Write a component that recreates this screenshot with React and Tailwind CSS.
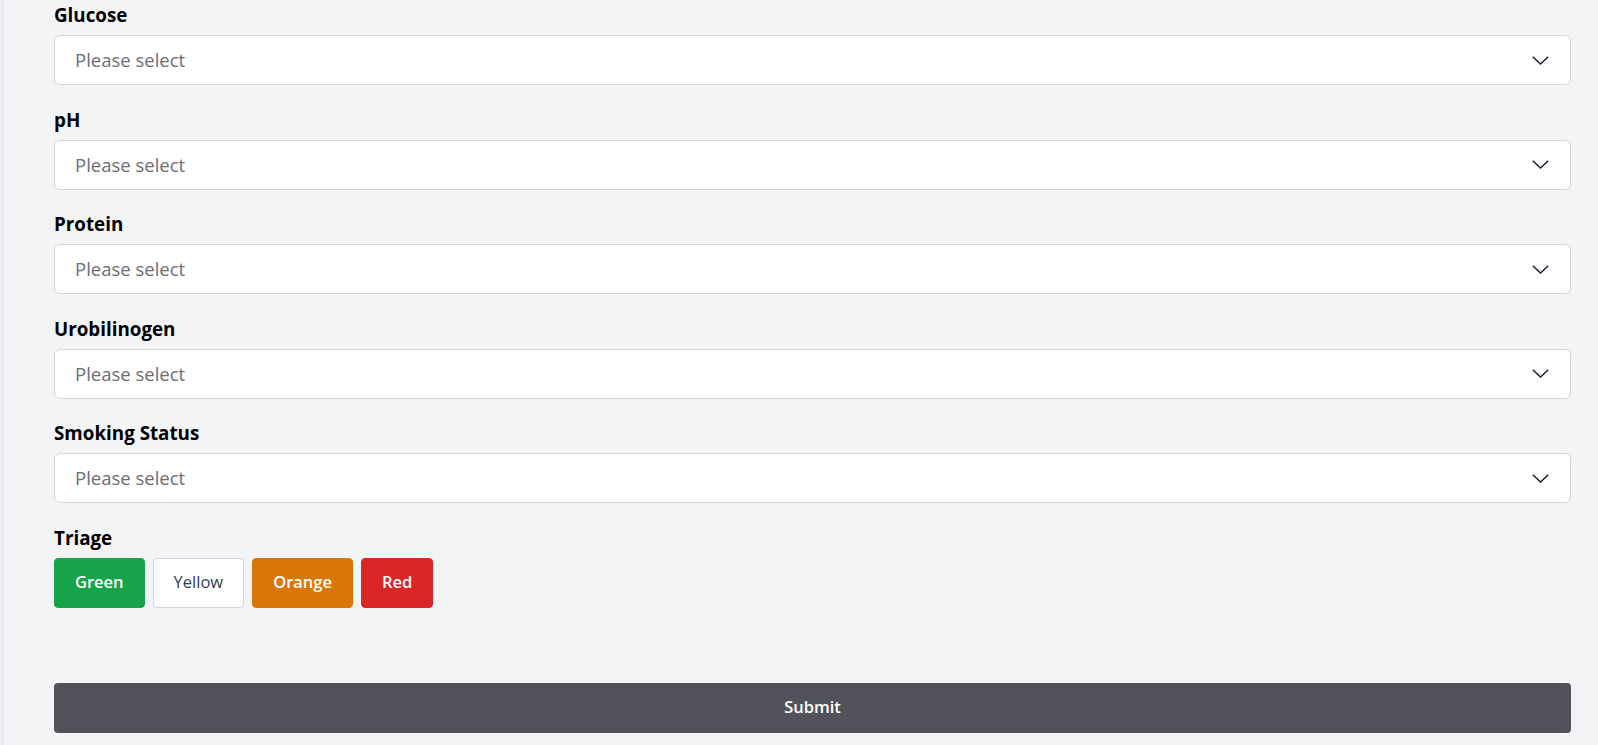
import { useState } from 'react'
import clsx from 'clsx'

const FIELDS = ['Glucose', 'pH', 'Protein', 'Urobilinogen', 'Smoking Status']

const TRIAGE = [
  { label: 'Green', cls: 'bg-[#16a34a] border-[#16a34a] text-white font-semibold' },
  { label: 'Yellow', cls: 'bg-white border-gray-300 text-gray-700' },
  { label: 'Orange', cls: 'bg-[#d97706] border-[#d97706] text-white font-semibold' },
  { label: 'Red', cls: 'bg-[#dc2626] border-[#dc2626] text-white font-semibold' },
]

function Chevron() {
  return (
    <svg width="17" height="9" viewBox="0 0 17 9" fill="none" className="shrink-0">
      <path d="M0.8 0.8 L8.5 8 L16.2 0.8" stroke="#111827" strokeWidth="1.4" />
    </svg>
  )
}

function SelectField({ label }) {
  return (
    <div>
      <label className="block text-[18.8px] leading-6 font-bold text-black mb-2">{label}</label>
      <button
        type="button"
        className="w-full h-[50px] flex items-center justify-between bg-white border border-[#d4d6da] rounded-md pl-5 pr-[21px] text-left"
      >
        <span className="text-[18.5px] text-[#6b6e75]">Please select</span>
        <Chevron />
      </button>
    </div>
  )
}

export default function App() {
  const [triage, setTriage] = useState(null)

  return (
    <div className="min-h-screen flex bg-[#f3f4f6]" style={{ fontFamily: '"Open Sans", "Noto Sans", sans-serif' }}>
      {/* left sidebar edge */}
      <div className="w-[4px] shrink-0 bg-[#eceef1] border-r border-[#e3e5e8]" />

      <form className="flex-1 pl-[50px] pr-[27px] pt-[3px] pb-4" onSubmit={e => e.preventDefault()}>
        <div className="space-y-[22.5px]">
          {FIELDS.map(f => <SelectField key={f} label={f} />)}

          <div>
            <label className="block text-[18.8px] leading-6 font-bold text-black mb-2">Triage</label>
            <div className="flex gap-2">
              {TRIAGE.map(t => (
                <button
                  key={t.label}
                  type="button"
                  onClick={() => setTriage(t.label)}
                  className={clsx('h-[50px] px-5 border rounded text-[16.5px]', t.cls, triage === t.label && 'ring-2 ring-offset-1 ring-gray-400')}
                >
                  {t.label}
                </button>
              ))}
            </div>
          </div>
        </div>

        <button type="submit" className="mt-[75px] w-full h-[50px] rounded bg-[#52525b] text-white font-semibold text-[16.5px]">
          Submit
        </button>
      </form>
    </div>
  )
}
